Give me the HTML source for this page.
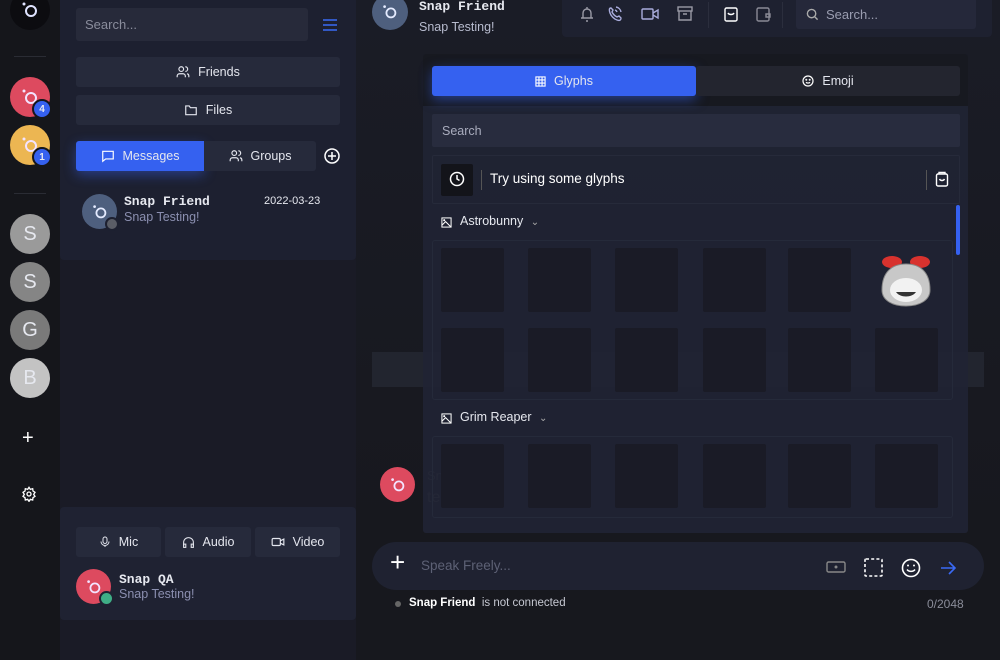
<!DOCTYPE html>
<html><head><meta charset="utf-8">
<style>
*{box-sizing:border-box;margin:0;padding:0}
body{width:1000px;height:660px;overflow:hidden;background:#17181e;font-family:"Liberation Sans",sans-serif;color:#e6e8ef;position:relative}
.a{position:absolute}
.av{position:absolute;border-radius:50%;display:flex;align-items:center;justify-content:center}
.btn{position:absolute;background:#262a3b;border-radius:3px;display:flex;align-items:center;justify-content:center;font-size:12.5px;color:#e4e6ee;gap:8px}
.cell{position:absolute;width:63px;height:64px;background:#1a1b26;border-radius:2px}
svg{display:block}
.mono{font-family:"Liberation Mono",monospace;font-weight:bold}
</style></head><body>
<!-- rail -->
<div class="a" style="left:0;top:0;width:60px;height:660px;background:#15161b"></div>
<div class="av" style="left:10px;top:-10px;width:40px;height:40px;background:#0c0c10"><svg width="20" height="20" viewBox="0 0 20 20"><circle cx="11" cy="11" r="5" fill="none" stroke="#dfe3ff" stroke-width="2"/><circle cx="4" cy="4" r="1.5" fill="#dfe3ff"/></svg></div>
<div class="a" style="left:14px;top:56px;width:32px;height:1px;background:#2a2c34"></div>
<div class="av" style="left:10px;top:77px;width:40px;height:40px;background:#dd4a5f"><svg width="20" height="20" viewBox="0 0 20 20"><circle cx="11" cy="11" r="5" fill="none" stroke="#f3e3ff" stroke-width="2"/><circle cx="4" cy="4" r="1.5" fill="#f3e3ff"/></svg></div>
<div class="av" style="left:32px;top:99px;width:20px;height:20px;background:#3561f0;border:2px solid #15161b;font-size:10px;font-weight:bold">4</div>
<div class="av" style="left:10px;top:125px;width:40px;height:40px;background:#ecb652"><svg width="20" height="20" viewBox="0 0 20 20"><circle cx="11" cy="11" r="5" fill="none" stroke="#f3e3ff" stroke-width="2"/><circle cx="4" cy="4" r="1.5" fill="#f3e3ff"/></svg></div>
<div class="av" style="left:32px;top:147px;width:20px;height:20px;background:#3561f0;border:2px solid #15161b;font-size:10px;font-weight:bold">1</div>
<div class="a" style="left:14px;top:193px;width:32px;height:1px;background:#2a2c34"></div>
<div class="av" style="left:10px;top:214px;width:40px;height:40px;background:#9a9a9a;font-size:20px">S</div>
<div class="av" style="left:10px;top:262px;width:40px;height:40px;background:#858585;font-size:20px">S</div>
<div class="av" style="left:10px;top:310px;width:40px;height:40px;background:#7a7a7a;font-size:20px">G</div>
<div class="av" style="left:10px;top:358px;width:40px;height:40px;background:#c3c3c3;font-size:20px">B</div>
<div class="a" style="left:22px;top:427px;font-size:20px;color:#fff">+</div>
<svg class="a" style="left:21px;top:486px" width="16" height="16" viewBox="0 0 24 24" fill="none" stroke="#fff" stroke-width="2"><circle cx="12" cy="12" r="3"/><path d="M12 2l2 3 3.5-1 .5 3.5 3 2-2 3 2 3-3 2-.5 3.5-3.5-1-2 3-2-3-3.5 1-.5-3.5-3-2 2-3-2-3 3-2 .5-3.5 3.5 1z"/></svg>
<!-- sidebar -->
<div class="a" style="left:60px;top:0;width:296px;height:660px;background:#1a1b26"></div>
<div class="a" style="left:60px;top:0;width:296px;height:260px;background:#1d2030;border-radius:0 0 4px 4px"></div>
<div class="a" style="left:76px;top:8px;width:232px;height:33px;background:#272a3a;border-radius:3px;padding:9px;font-size:13px;color:#8a8d9c">Search...</div>
<svg class="a" style="left:322px;top:18px" width="16" height="14"><path d="M1 2h14M1 7h14M1 12h14" stroke="#3a6af5" stroke-width="1.6"/></svg>
<div class="btn" style="left:76px;top:57px;width:264px;height:30px"><svg width="14" height="14" viewBox="0 0 24 24" fill="none" stroke="#e4e6ee" stroke-width="2"><circle cx="9" cy="7" r="4"/><path d="M2 21v-2a4 4 0 014-4h6a4 4 0 014 4v2M16 3a4 4 0 010 8M22 21v-2a4 4 0 00-3-4"/></svg>Friends</div>
<div class="btn" style="left:76px;top:95px;width:264px;height:30px"><svg width="14" height="14" viewBox="0 0 24 24" fill="none" stroke="#e4e6ee" stroke-width="2"><path d="M3 5h6l2 3h10v12H3z"/></svg>Files</div>
<div class="btn" style="left:76px;top:141px;width:128px;height:30px;background:#3561f0;box-shadow:0 4px 12px rgba(53,97,240,.45);border-radius:3px 0 0 3px"><svg width="14" height="14" viewBox="0 0 24 24" fill="none" stroke="#fff" stroke-width="2"><path d="M3 4h18v13H8l-5 4z"/></svg>Messages</div>
<div class="btn" style="left:204px;top:141px;width:112px;height:30px;border-radius:0 3px 3px 0"><svg width="14" height="14" viewBox="0 0 24 24" fill="none" stroke="#e4e6ee" stroke-width="2"><circle cx="9" cy="7" r="4"/><path d="M2 21v-2a4 4 0 014-4h6a4 4 0 014 4v2M16 3a4 4 0 010 8M22 21v-2a4 4 0 00-3-4"/></svg>Groups</div>
<svg class="a" style="left:324px;top:148px" width="16" height="16" viewBox="0 0 16 16" fill="none" stroke="#fff" stroke-width="1.5"><circle cx="8" cy="8" r="7"/><path d="M8 4v8M4 8h8"/></svg>
<div class="av" style="left:82px;top:194px;width:35px;height:35px;background:#4e5f7e"><svg width="18" height="18" viewBox="0 0 20 20"><circle cx="11" cy="11" r="5" fill="none" stroke="#e5ebff" stroke-width="2"/><circle cx="4" cy="4" r="1.5" fill="#e5ebff"/></svg></div>
<div class="av" style="left:105px;top:217px;width:14px;height:14px;background:#5a5d66;border:2px solid #1d2030"></div>
<div class="a mono" style="left:124px;top:194px;font-size:13px">Snap Friend</div>
<div class="a" style="left:124px;top:210px;font-size:12.5px;color:#8b8fb0">Snap Testing!</div>
<div class="a" style="left:264px;top:195px;font-size:11px">2022-03-23</div>
<div class="a" style="left:60px;top:507px;width:296px;height:113px;background:#1f2232;border-radius:4px"></div>
<div class="btn" style="left:76px;top:527px;width:85px;height:30px"><svg width="12" height="14" viewBox="0 0 24 24" fill="none" stroke="#e4e6ee" stroke-width="2"><rect x="8" y="2" width="8" height="13" rx="4"/><path d="M4 11a8 8 0 0016 0M12 19v3"/></svg>Mic</div>
<div class="btn" style="left:165px;top:527px;width:86px;height:30px"><svg width="13" height="13" viewBox="0 0 24 24" fill="none" stroke="#e4e6ee" stroke-width="2"><path d="M3 18v-6a9 9 0 0118 0v6"/><rect x="3" y="15" width="4" height="6"/><rect x="17" y="15" width="4" height="6"/></svg>Audio</div>
<div class="btn" style="left:255px;top:527px;width:85px;height:30px"><svg width="14" height="12" viewBox="0 0 24 20" fill="none" stroke="#e4e6ee" stroke-width="2"><rect x="2" y="4" width="14" height="12" rx="2"/><path d="M16 8l6-3v10l-6-3"/></svg>Video</div>
<div class="av" style="left:76px;top:569px;width:35px;height:35px;background:#dd4a5f"><svg width="18" height="18" viewBox="0 0 20 20"><circle cx="11" cy="11" r="5" fill="none" stroke="#f3e3ff" stroke-width="2"/><circle cx="4" cy="4" r="1.5" fill="#f3e3ff"/></svg></div>
<div class="av" style="left:99px;top:591px;width:15px;height:15px;background:#3fae86;border:2px solid #1f2232"></div>
<div class="a mono" style="left:119px;top:572px;font-size:13px">Snap QA</div>
<div class="a" style="left:119px;top:587px;font-size:12.5px;color:#8b8fb0">Snap Testing!</div>
<!-- main -->
<div class="a" style="left:356px;top:0;width:644px;height:540px;background:linear-gradient(#1a1c26,#17181e)"></div>
<div class="av" style="left:372px;top:-6px;width:36px;height:36px;background:#4e5f7e"><svg width="18" height="18" viewBox="0 0 20 20"><circle cx="11" cy="11" r="5" fill="none" stroke="#e5ebff" stroke-width="2"/><circle cx="4" cy="4" r="1.5" fill="#e5ebff"/></svg></div>
<div class="a mono" style="left:419px;top:-1px;font-size:13px">Snap Friend</div>
<div class="a" style="left:419px;top:20px;font-size:12.5px;color:#b8bccf">Snap Testing!</div>
<div class="a" style="left:562px;top:0;width:430px;height:37px;background:#1e2130;border-radius:0 0 4px 4px"></div>
<svg class="a" style="left:578px;top:5px" width="200" height="18" viewBox="0 0 200 18" fill="none" stroke-width="1.4">
<path d="M3 13h12M5 13V8a4 4 0 018 0v5M8 16h2M9 2v2" stroke="#9a9aa6"/>
<path d="M33 3c-2 0-2 2-1 5s4 6 7 7 4 0 4-2l-2-2-2 1c-2-1-4-3-5-5l1-2z M38 2a6 6 0 015 5M37 5a3 3 0 012 2" stroke="#a9acdc"/>
<rect x="64" y="4" width="11" height="10" rx="1" stroke="#a9acdc"/><path d="M75 8l5-3v8l-5-3" stroke="#a9acdc"/>
<rect x="100" y="2" width="14" height="4" stroke="#9a9aa6"/><path d="M101 6v9h12V6M105 9h4" stroke="#9a9aa6"/>
<path d="M131 0h-1" stroke="#333"/>
<rect x="147" y="3" width="12" height="13" rx="1.5" stroke="#fff"/><path d="M150 8c1 2 5 2 6 0" stroke="#fff"/>
<rect x="179" y="3" width="12" height="13" rx="1.5" stroke="#8a8a96"/><path d="M188 9h4v3h-4z" stroke="#8a8a96"/>
</svg>
<div class="a" style="left:708px;top:2px;width:1px;height:26px;background:#2b2e3d"></div>
<div class="a" style="left:782px;top:2px;width:1px;height:26px;background:#2b2e3d"></div>
<div class="a" style="left:796px;top:0;width:180px;height:29px;background:#25283a;border-radius:0 0 3px 3px;padding:7px 10px;font-size:13px;color:#9a9db0;display:flex;gap:7px;align-items:center"><svg width="13" height="13" viewBox="0 0 14 14" fill="none" stroke="#aaa" stroke-width="1.5"><circle cx="6" cy="6" r="4.5"/><path d="M9.5 9.5l3 3"/></svg>Search...</div>
<div class="a" style="left:372px;top:352px;width:612px;height:35px;background:#22252f"></div>
<div class="av" style="left:380px;top:467px;width:35px;height:35px;background:#dd4a5f"><svg width="18" height="18" viewBox="0 0 20 20"><circle cx="11" cy="11" r="5" fill="none" stroke="#f3e3ff" stroke-width="2"/><circle cx="4" cy="4" r="1.5" fill="#f3e3ff"/></svg></div>
<div class="a" style="left:427px;top:468px;font-size:13px;color:#555">Sn</div>
<div class="a" style="left:427px;top:489px;font-size:16px;color:#555">te</div>
<!-- glyph panel -->
<div class="a" style="left:423px;top:54px;width:545px;height:479px;background:rgba(32,36,52,.93);border-radius:3px"></div>
<div class="a" style="left:423px;top:54px;width:545px;height:52px;background:#171920;border-radius:3px 3px 0 0"></div>
<div class="btn" style="left:432px;top:66px;width:264px;height:30px;background:#3561f0;box-shadow:0 4px 12px rgba(53,97,240,.5);font-size:12.5px"><svg width="11" height="11" viewBox="0 0 12 12" fill="none" stroke="#fff" stroke-width="1.2"><rect x="1" y="1" width="10" height="10"/><path d="M4.3 1v10M7.7 1v10M1 4.3h10M1 7.7h10"/></svg>Glyphs</div>
<div class="btn" style="left:696px;top:66px;width:264px;height:30px;background:#23252f"><svg width="12" height="12" viewBox="0 0 12 12" fill="none" stroke="#fff" stroke-width="1.2"><circle cx="6" cy="6" r="5"/><path d="M4 7.3c1 1 3 1 4 0"/><circle cx="4.3" cy="4.7" r=".4"/><circle cx="7.7" cy="4.7" r=".4"/></svg>Emoji</div>
<div class="a" style="left:432px;top:114px;width:528px;height:33px;background:#282c3e;border-radius:2px;padding:10px 10px;font-size:12.5px;color:#a9acbd">Search</div>
<div class="a" style="left:432px;top:155px;width:528px;height:49px;border:1px solid #262a3a;border-radius:2px"></div>
<div class="a" style="left:441px;top:164px;width:32px;height:32px;background:#13141a;border-radius:2px"></div>
<svg class="a" style="left:449px;top:171px" width="16" height="16" viewBox="0 0 16 16" fill="none" stroke="#fff" stroke-width="1.5"><circle cx="8" cy="8" r="6.5"/><path d="M8 4v4l2.5 1.5"/></svg>
<div class="a" style="left:481px;top:170px;width:1px;height:20px;background:#555"></div>
<div class="a" style="left:490px;top:171px;font-size:13.5px;color:#fff">Try using some glyphs</div>
<div class="a" style="left:926px;top:170px;width:1px;height:20px;background:#555"></div>
<svg class="a" style="left:935px;top:171px" width="14" height="16" viewBox="0 0 14 16" fill="none" stroke="#fff" stroke-width="1.4"><rect x="1.5" y="3" width="11" height="12" rx="1.5"/><path d="M4 3V1.5h6V3M4.5 8c1 2 4 2 5 0"/></svg>
<div class="a" style="left:956px;top:205px;width:4px;height:50px;background:#3561f0;border-radius:2px"></div>
<svg class="a" style="left:441px;top:217px" width="11" height="11" viewBox="0 0 12 12" fill="none" stroke="#fff" stroke-width="1.1"><rect x="1" y="1" width="10" height="10"/><path d="M1 9l4-4 6 6"/><circle cx="3.5" cy="3.5" r=".6"/></svg>
<div class="a" style="left:460px;top:214px;font-size:12.5px">Astrobunny <span style="color:#aaa;font-size:10px;margin-left:4px">&#8964;</span></div>
<div class="a" style="left:432px;top:240px;width:521px;height:160px;border:1px solid #252a3a;border-radius:3px"></div>
<div class="cell" style="left:441px;top:248px"></div><div class="cell" style="left:528px;top:248px"></div><div class="cell" style="left:615px;top:248px"></div><div class="cell" style="left:703px;top:248px"></div><div class="cell" style="left:788px;top:248px"></div>
<svg class="a" style="left:876px;top:252px" width="60" height="56" viewBox="0 0 60 56"><ellipse cx="16" cy="10" rx="10" ry="6" fill="#d8322e"/><ellipse cx="44" cy="10" rx="10" ry="6" fill="#d8322e"/><path d="M6 38c0-18 10-26 24-26s24 8 24 26c0 10-10 16-24 16S6 48 6 38z" fill="#c8c8c8" stroke="#888"/><ellipse cx="30" cy="38" rx="16" ry="12" fill="#f2f2f2"/><path d="M20 40c4 6 16 6 20 0z" fill="#333"/></svg>
<div class="cell" style="left:441px;top:328px"></div><div class="cell" style="left:528px;top:328px"></div><div class="cell" style="left:615px;top:328px"></div><div class="cell" style="left:703px;top:328px"></div><div class="cell" style="left:788px;top:328px"></div><div class="cell" style="left:875px;top:328px"></div>
<svg class="a" style="left:441px;top:413px" width="11" height="11" viewBox="0 0 12 12" fill="none" stroke="#fff" stroke-width="1.1"><rect x="1" y="1" width="10" height="10"/><path d="M1 9l4-4 6 6"/><circle cx="3.5" cy="3.5" r=".6"/></svg>
<div class="a" style="left:460px;top:410px;font-size:12.5px">Grim Reaper <span style="color:#aaa;font-size:10px;margin-left:4px">&#8964;</span></div>
<div class="a" style="left:432px;top:436px;width:521px;height:82px;border:1px solid #252a3a;border-radius:3px"></div>
<div class="cell" style="left:441px;top:444px"></div><div class="cell" style="left:528px;top:444px"></div><div class="cell" style="left:615px;top:444px"></div><div class="cell" style="left:703px;top:444px"></div><div class="cell" style="left:788px;top:444px"></div><div class="cell" style="left:875px;top:444px"></div>
<!-- input -->
<div class="a" style="left:372px;top:542px;width:612px;height:48px;background:#1f2231;border-radius:24px"></div>
<div class="a" style="left:390px;top:547px;font-size:26px;color:#fff;font-weight:300">+</div>
<div class="a" style="left:421px;top:558px;font-size:13.5px;color:#5d6175">Speak Freely...</div>
<svg class="a" style="left:826px;top:558px" width="130" height="20" viewBox="0 0 130 20" fill="none">
<rect x="1" y="4" width="18" height="10" rx="1.5" stroke="#888" stroke-width="1.4"/><circle cx="10" cy="9" r="1.5" fill="#888"/>
<rect x="39" y="1" width="17" height="17" rx="1" stroke="#fff" stroke-width="1.6" stroke-dasharray="3 2.2"/>
<circle cx="85" cy="10" r="8.5" stroke="#fff" stroke-width="1.6"/><path d="M81 11.5c2 2.5 6 2.5 8 0" stroke="#fff" stroke-width="1.5"/><circle cx="82" cy="7.5" r="1" fill="#fff"/><circle cx="88" cy="7.5" r="1" fill="#fff"/>
<path d="M115 10h14M123 4l6 6-6 6" stroke="#3a6af5" stroke-width="1.6"/>
</svg>
<div class="a" style="left:395px;top:601px;width:6px;height:6px;border-radius:50%;background:#666"></div>
<div class="a" style="left:409px;top:597px;font-size:11.5px;color:#c6c8d2"><b style="color:#fff">Snap Friend</b>&nbsp; is not connected</div>
<div class="a" style="left:927px;top:597px;font-size:12px;color:#8a8c99">0/2048</div>
</body></html>
